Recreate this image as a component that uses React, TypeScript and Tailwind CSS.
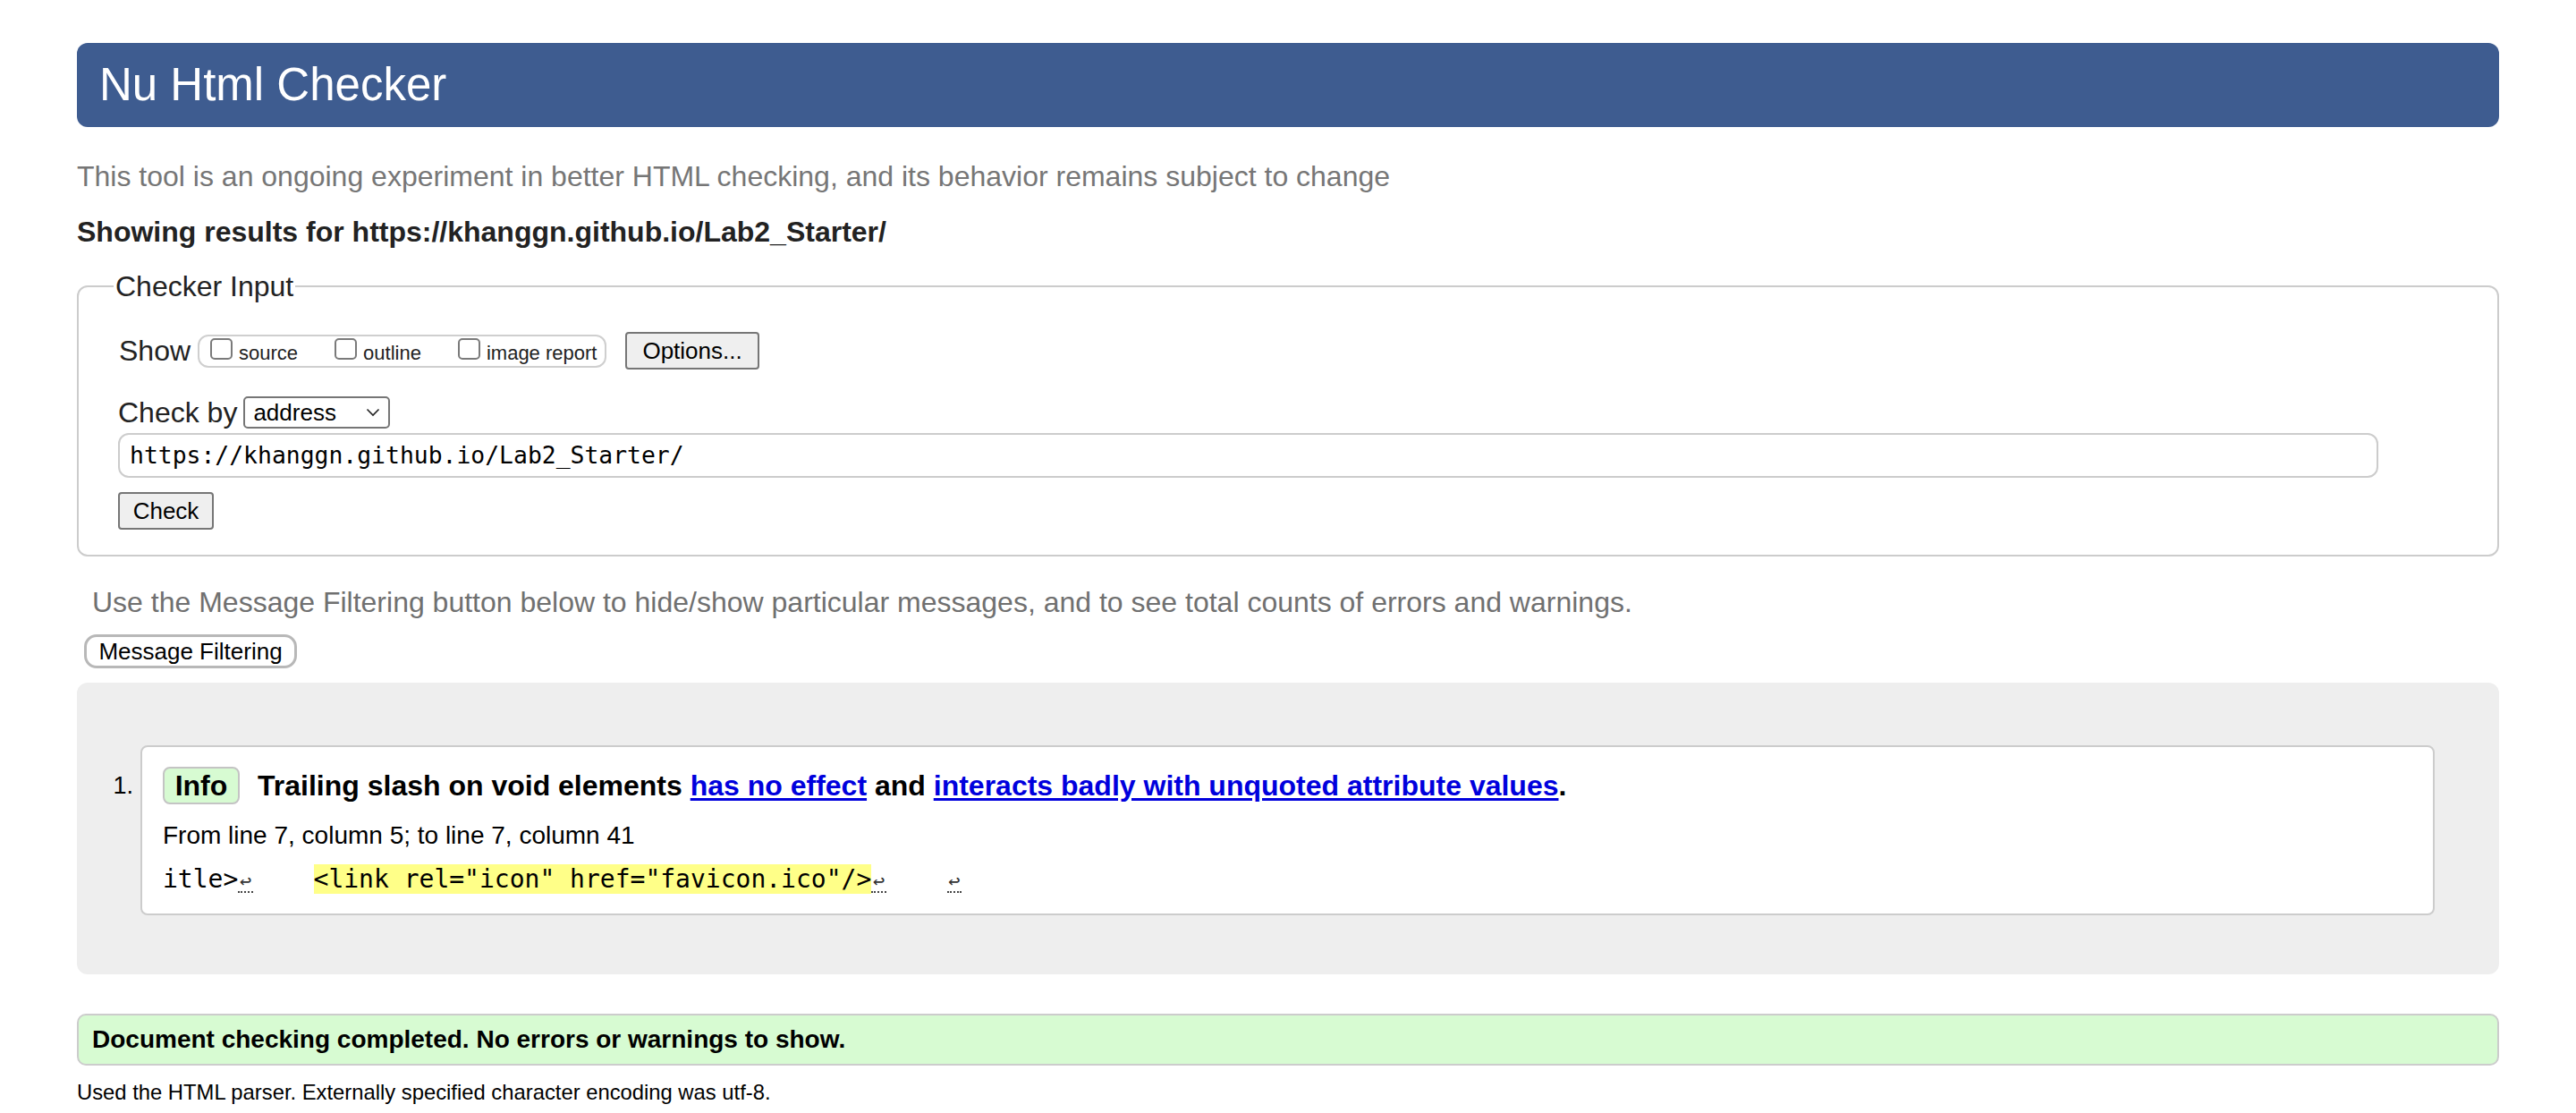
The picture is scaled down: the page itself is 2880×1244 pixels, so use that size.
import React from "react"

const sans = "font-['Liberation_Sans',Arial,sans-serif]"
const mono = "font-['DejaVu_Sans_Mono',monospace]"

const LineBreak = () => (
  <span className="inline-block w-[16.8px] border-b-2 border-dotted border-[#444] text-center text-[22px] leading-none text-[#333]">↩</span>
)

const Checkbox = ({ label }: { label: string }) => (
  <span className="flex items-baseline gap-[7px]">
    <span className="inline-block h-[24px] w-[25px] rounded-[5px] border-2 border-[#7a7a7a] bg-white" />
    <span className="text-[22px] leading-[24px] text-[#222]">{label}</span>
  </span>
)

export default function App() {
  return (
    <div className={`${sans} min-h-[1244px] bg-white px-[86px] pt-[48px] text-black`}>
      <h1 className="h-[94px] rounded-[12px] bg-[#3e5c90] pl-[25px] text-[51px] leading-[94px] font-normal text-white">
        Nu Html Checker
      </h1>

      <p className="mt-[35px] text-[32px] leading-[40px] text-[#767676]">
        This tool is an ongoing experiment in better HTML checking, and its behavior remains subject to change
      </p>
      <p className="mt-[22px] text-[32px] leading-[40px] font-bold text-[#222]">
        Showing results for https://khanggn.github.io/Lab2_Starter/
      </p>

      <fieldset className="mt-[23px] rounded-[12px] border-2 border-[#cccccc] pl-[39px] pb-[28px]">
        <legend className="px-[2px] text-[32px] leading-[36px] text-[#222]">Checker Input</legend>

        <div className="ml-[6px] mt-[33px] flex h-[42px] items-center">
          <span className="text-[32px] leading-[36px] text-[#222]">Show</span>
          <div className="ml-[8px] flex h-[37px] w-[457px] items-center gap-[41px] rounded-[12px] border-2 border-[#cfcfcf] pl-[12px]">
            <Checkbox label="source" />
            <Checkbox label="outline" />
            <Checkbox label="image report" />
          </div>
          <button className="ml-[21px] h-[42px] w-[150px] rounded-[4px] border-2 border-[#767676] bg-[#efefef] text-[26px] text-black">
            Options...
          </button>
        </div>

        <div className="ml-[5px] mt-[30px] flex h-[36px] items-center">
          <span className="text-[32px] leading-[36px] text-[#222]">Check by</span>
          <div className="ml-[7px] flex h-[36px] w-[164px] items-center justify-between rounded-[5px] border-2 border-[#767676] bg-white pl-[9px] pr-[9px]">
            <span className="text-[26px] leading-[30px] text-black">address</span>
            <svg width="16" height="10" viewBox="0 0 16 10" fill="none" stroke="#222" strokeWidth="1.6">
              <path d="M1.5 1.5 8 8l6.5-6.5" />
            </svg>
          </div>
        </div>

        <div className={`${mono} ml-[5px] mt-[5px] flex h-[50px] w-[2527px] items-center rounded-[12px] border-2 border-[#cccccc] bg-white pl-[11px] text-[26.4px] text-black`}>
          https://khanggn.github.io/Lab2_Starter/
        </div>

        <button className="ml-[5px] mt-[16px] block h-[42px] w-[107px] rounded-[4px] border-2 border-[#767676] bg-[#efefef] text-[26px] text-black">
          Check
        </button>
      </fieldset>

      <p className="mt-[33px] pl-[17px] text-[32px] leading-[36px] text-[#707070]">
        Use the Message Filtering button below to hide/show particular messages, and to see total counts of errors and warnings.
      </p>
      <button className="ml-[8px] mt-[18px] block h-[38px] w-[238px] rounded-[14px] border-[3px] border-[#b8b8b8] bg-white text-[26px] leading-[30px] text-black">
        Message Filtering
      </button>

      <div className="mt-[16px] flex rounded-[12px] bg-[#eeeeee] pt-[70px] pb-[66px] pr-[72px]">
        <div className="w-[71px] shrink-0 pr-[8px] pt-[24px] text-right text-[27px] leading-[42px] text-black">1.</div>
        <div className="flex-1 rounded-[8px] border-2 border-[#cccccc] bg-white pl-[23px] pt-[22px] pb-[22px]">
          <div className="flex h-[42px] items-center">
            <span className="flex h-[42px] w-[86px] items-center justify-center rounded-[8px] border-2 border-[#c4c4c4] bg-[#d7fbd2] text-[32px] font-bold text-black">
              Info
            </span>
            <span className="ml-[20px] text-[32px] font-bold text-black">
              Trailing slash on void elements{" "}
              <a className="text-[#0000dd] underline underline-offset-[3px]" href="#">has no effect</a>
              {" "}and{" "}
              <a className="text-[#0000dd] underline underline-offset-[3px]" href="#">interacts badly with unquoted attribute values</a>.
            </span>
          </div>
          <p className="mt-[17px] text-[28px] leading-[36px] text-black">From line 7, column 5; to line 7, column 41</p>
          <p className={`${mono} mt-[15px] whitespace-pre text-[28px] leading-[32px] text-black`}>
            itle&gt;<LineBreak />{"    "}
            <span className="bg-[#ffff88]">&lt;link rel="icon" href="favicon.ico"/&gt;</span>
            <LineBreak />{"    "}<LineBreak />
          </p>
        </div>
      </div>

      <div className="mt-[44px] flex h-[58px] items-center rounded-[10px] border-2 border-[#cccccc] bg-[#d7fbd2] pl-[15px] text-[28px] font-bold text-black">
        Document checking completed. No errors or warnings to show.
      </div>
      <p className="mt-[15px] text-[23.8px] leading-[30px] text-black">
        Used the HTML parser. Externally specified character encoding was utf-8.
      </p>
    </div>
  )
}
